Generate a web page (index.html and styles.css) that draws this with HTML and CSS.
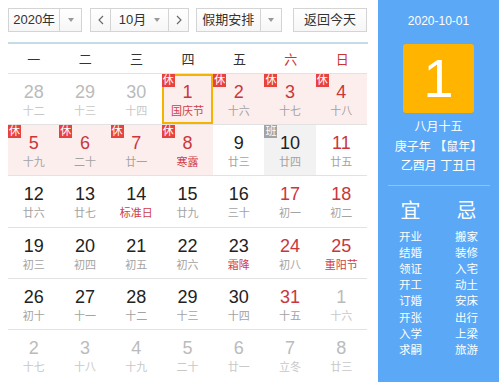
FILE: index.html
```html
<!DOCTYPE html>
<html>
<head>
<meta charset="utf-8">
<link rel="stylesheet" href="styles.css">
</head>
<body>
<div class="app">
  <div class="main">
    <div class="toolbar">
      <div class="sel year"><span class="val">2020年</span><span class="arr"><i class="tri"></i></span></div>
      <div class="sel month">
        <span class="nav"><svg width="6" height="10" viewBox="0 0 6 10"><path d="M5 1 L1 5 L5 9" fill="none" stroke="#666" stroke-width="1.1"/></svg></span>
        <span class="val">10月 <i class="tri"></i></span>
        <span class="nav"><svg width="6" height="10" viewBox="0 0 6 10"><path d="M1 1 L5 5 L1 9" fill="none" stroke="#666" stroke-width="1.1"/></svg></span>
      </div>
      <div class="sel holiday"><span class="val">假期安排</span><span class="arr"><i class="tri"></i></span></div>
      <div class="btn">返回今天</div>
    </div>
    <div class="week">
      <span>一</span><span>二</span><span>三</span><span>四</span><span>五</span><span class="we">六</span><span class="we">日</span>
    </div>
    <div class="grid">
      <div class="row">
        <div class="cell other"><b>28</b><s>十二</s></div>
        <div class="cell other"><b>29</b><s>十三</s></div>
        <div class="cell other"><b>30</b><s>十四</s></div>
        <div class="cell rest today red"><em class="tag">休</em><b>1</b><s class="fest">国庆节</s></div>
        <div class="cell rest red"><em class="tag">休</em><b>2</b><s>十六</s></div>
        <div class="cell rest red"><em class="tag">休</em><b>3</b><s>十七</s></div>
        <div class="cell rest red"><em class="tag">休</em><b>4</b><s>十八</s></div>
      </div>
      <div class="row">
        <div class="cell rest red"><em class="tag">休</em><b>5</b><s>十九</s></div>
        <div class="cell rest red"><em class="tag">休</em><b>6</b><s>二十</s></div>
        <div class="cell rest red"><em class="tag">休</em><b>7</b><s>廿一</s></div>
        <div class="cell rest red"><em class="tag">休</em><b>8</b><s class="fest">寒露</s></div>
        <div class="cell"><b>9</b><s>廿三</s></div>
        <div class="cell work"><em class="tag gray">班</em><b>10</b><s>廿四</s></div>
        <div class="cell red"><b>11</b><s>廿五</s></div>
      </div>
      <div class="row">
        <div class="cell"><b>12</b><s>廿六</s></div>
        <div class="cell"><b>13</b><s>廿七</s></div>
        <div class="cell"><b>14</b><s class="fest">标准日</s></div>
        <div class="cell"><b>15</b><s>廿九</s></div>
        <div class="cell"><b>16</b><s>三十</s></div>
        <div class="cell red"><b>17</b><s>初一</s></div>
        <div class="cell red"><b>18</b><s>初二</s></div>
      </div>
      <div class="row">
        <div class="cell"><b>19</b><s>初三</s></div>
        <div class="cell"><b>20</b><s>初四</s></div>
        <div class="cell"><b>21</b><s>初五</s></div>
        <div class="cell"><b>22</b><s>初六</s></div>
        <div class="cell"><b>23</b><s class="fest">霜降</s></div>
        <div class="cell red"><b>24</b><s>初八</s></div>
        <div class="cell red"><b>25</b><s class="fest">重阳节</s></div>
      </div>
      <div class="row">
        <div class="cell"><b>26</b><s>初十</s></div>
        <div class="cell"><b>27</b><s>十一</s></div>
        <div class="cell"><b>28</b><s>十二</s></div>
        <div class="cell"><b>29</b><s>十三</s></div>
        <div class="cell"><b>30</b><s>十四</s></div>
        <div class="cell red"><b>31</b><s>十五</s></div>
        <div class="cell other"><b>1</b><s>十六</s></div>
      </div>
      <div class="row">
        <div class="cell other"><b>2</b><s>十七</s></div>
        <div class="cell other"><b>3</b><s>十八</s></div>
        <div class="cell other"><b>4</b><s>十九</s></div>
        <div class="cell other"><b>5</b><s>二十</s></div>
        <div class="cell other"><b>6</b><s>廿一</s></div>
        <div class="cell other"><b>7</b><s>立冬</s></div>
        <div class="cell other"><b>8</b><s>廿三</s></div>
      </div>
    </div>
  </div>
  <div class="side">
    <div class="date">2020-10-01</div>
    <div class="big">1</div>
    <div class="lunar">八月十五</div>
    <div class="lunar">庚子年 【鼠年】</div>
    <div class="lunar">乙酉月 丁丑日</div>
    <div class="sep"></div>
    <div class="yj">
      <div class="col">
        <div class="head">宜</div>
        <div>开业</div><div>结婚</div><div>领证</div><div>开工</div><div>订婚</div><div>开张</div><div>入学</div><div>求嗣</div>
      </div>
      <div class="col">
        <div class="head">忌</div>
        <div>搬家</div><div>装修</div><div>入宅</div><div>动土</div><div>安床</div><div>出行</div><div>上梁</div><div>旅游</div>
      </div>
    </div>
  </div>
</div>
</body>
</html>
```

FILE: styles.css
```css
* { box-sizing: border-box; }
html, body { margin: 0; padding: 0; background: #fff; }
body {
  font-family: "Liberation Sans", "Noto Sans CJK SC", sans-serif;
  color: #333;
  width: 499px;
  height: 382px;
  overflow: hidden;
}
.app { display: flex; height: 382px; }
.main { width: 378px; padding: 8px 11px 0 8px; }
.toolbar { display: flex; height: 24px; align-items: stretch; }
.sel, .btn {
  display: flex;
  border: 1px solid #d4d4d4;
  background: linear-gradient(#fff, #f6f6f6);
  font-size: 13px;
  line-height: 22px;
  color: #333;
}
.sel .val { display: flex; align-items: center; justify-content: center; }
.sel .arr { width: 22px; border-left: 1px solid #d4d4d4; display: flex; align-items: center; justify-content: center; }
.tri { display: inline-block; width: 0; height: 0; border-left: 3px solid transparent; border-right: 3px solid transparent; border-top: 4px solid #999; }
.year { width: 74px; }
.year .val { width: 51px; }
.month { width: 99px; margin-left: 8px; }
.month .nav { width: 20px; display: flex; align-items: center; justify-content: center; }
.month .nav:first-child { border-right: 1px solid #d4d4d4; }
.month .nav:last-child { border-left: 1px solid #d4d4d4; }
.month .val { width: 57px; gap: 8px; }
.holiday { width: 86px; margin-left: 7px; }
.holiday .val { width: 64px; }
.btn { width: 75px; margin-left: 11px; justify-content: center; }
.week {
  margin-top: 10px;
  border-top: 2px solid #c5dbe6;
  display: grid;
  grid-template-columns: repeat(7, 1fr);
  height: 31px;
  width: 360px;
  font-size: 13px;
  align-items: center;
  text-align: center;
  color: #333;
}
.week .we { color: #c33; }
.grid { width: 359px; }
.row { display: grid; grid-template-columns: repeat(7, 1fr); border-top: 1px solid #e2e2e2; height: 51.2px; }
.cell {
  position: relative;
  display: flex;
  flex-direction: column;
  align-items: center;
  padding-top: 8px;
}
.cell b { font-weight: normal; font-size: 18px; line-height: 21px; color: #222; }
.cell s { text-decoration: none; font-size: 11px; line-height: 17px; color: #a3a3a3; }
.cell.red b { color: #c9373d; }
.cell s.fest { color: #cf4048; }
.cell.other b { color: #bbb; }
.cell.other s { color: #c8c8c8; }
.cell.rest { background: #fdeeee; }
.cell.work { background: #f2f2f2; }
.cell.today { border: 2px solid #f5b300; padding-top: 6px; }
.tag {
  position: absolute;
  left: 0; top: 0;
  width: 13px; height: 13px;
  background: #e8423f;
  color: #fff;
  font-style: normal;
  font-size: 11px;
  line-height: 13px;
  text-align: center;
}
.today .tag { left: -2px; top: -2px; }
.tag.gray { background: #a3a3a3; }
.side {
  width: 121px;
  background: #5aa8f6;
  color: #fff;
  display: flex;
  flex-direction: column;
  align-items: center;
  padding-top: 13px;
}
.date { font-size: 12px; line-height: 16px; }
.big {
  margin-top: 15px;
  width: 71px;
  height: 69px;
  background: #ffb400;
  border-radius: 3px;
  font-size: 54px;
  line-height: 69px;
  text-align: center;
}
.lunar { font-size: 12px; line-height: 19.5px; }
.big + .lunar { margin-top: 5px; }
.sep { width: 102px; height: 1px; background: #8cc3f8; margin-top: 8px; }
.yj { display: flex; gap: 33px; margin-top: 8px; }
.col { display: flex; flex-direction: column; align-items: center; font-size: 11.5px; line-height: 16.2px; }
.col .head { font-size: 20px; line-height: 35px; margin-bottom: 0; }
```
